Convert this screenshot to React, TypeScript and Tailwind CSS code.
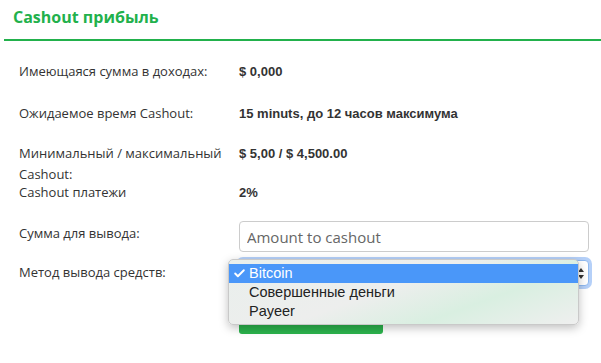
import { Check } from 'lucide-react';

const rows = [
  { label: 'Имеющаяся сумма в доходах:', value: '$ 0,000', h: 'h-[42px]' },
  { label: 'Ожидаемое время Cashout:', value: '15 minuts, до 12 часов максимума', h: 'h-[40px]' },
  { label: 'Минимальный / максимальный Cashout:', value: '$ 5,00 / $ 4,500.00', h: 'h-[39px]' },
  { label: 'Cashout платежи', value: '2%', h: 'h-[39px]' },
];

export default function App() {
  return (
    <div className="relative w-[601px] h-[363px] bg-white overflow-hidden font-['Open_Sans',sans-serif] text-[#333]">
      {/* header */}
      <div className="ml-[4px] h-[41px] border-b-2 border-[#22b14c] pl-[9px] pt-[6px]">
        <h2 className="text-[16px] leading-[22px] font-bold text-[#22b14c]">Cashout прибыль</h2>
      </div>

      <div className="pl-[19px] mt-[20px]">
        {rows.map((r) => (
          <div key={r.label} className={`flex ${r.h}`}>
            <div className="w-[220px] shrink-0 text-[13px] leading-[21px] pr-2">{r.label}</div>
            <div className="font-['Liberation_Sans',Arial,sans-serif] font-bold text-[13px] leading-[21px] text-[#333]">
              {r.value}
            </div>
          </div>
        ))}

        <div className="flex h-[39px]">
          <div className="w-[220px] shrink-0 pt-[2px] text-[13px] leading-[21px]">Сумма для вывода:</div>
          <input
            className="w-[350px] h-[31px] rounded-[4px] border border-[#ccc] px-[7px] text-[15px] text-[#555] placeholder:text-[#666] outline-none"
            placeholder="Amount to cashout"
          />
        </div>

        <div className="flex h-[45px]">
          <div className="w-[220px] shrink-0 pt-[2px] text-[13px] leading-[21px]">Метод вывода средств:</div>
          <div className="relative w-[350px] h-[26px] rounded-[4px] border border-[#8fb9f0] shadow-[0_0_0_3px_rgba(90,150,240,0.45)] bg-white">
            <svg className="absolute right-[3px] top-[6px]" width="8" height="13" viewBox="0 0 8 13">
              <path d="M1 5 L4 1 L7 5 Z" fill="#333" />
              <path d="M1 8 L4 12 L7 8 Z" fill="#333" />
            </svg>
          </div>
        </div>

        <div className="ml-[220px]">
          <div className="w-[144px] h-[29px] rounded-[3px] bg-[#2bb24c]" />
        </div>
      </div>

      {/* native select popup */}
      <div className="absolute left-[228px] top-[259px] w-[351px] h-[66px] rounded-[5px] border border-[#c9c9c9] shadow-[0_3px_10px_rgba(0,0,0,0.25)] bg-[linear-gradient(160deg,#e9efec_0%,#edeeed_45%,#d9efe1_70%,#efefef_100%)] pt-[4px] font-['Liberation_Sans',Arial,sans-serif] text-[14.5px] text-[#222]">
        <div className="flex items-center h-[19px] bg-[#4a97f9] text-white">
          <Check className="ml-[4px] w-[13px] h-[13px]" strokeWidth={3.5} />
          <span className="ml-[3px] leading-[19px]">Bitcoin</span>
        </div>
        <div className="pl-[20px] leading-[19px]">Совершенные деньги</div>
        <div className="pl-[20px] leading-[19px]">Payeer</div>
      </div>
    </div>
  );
}
